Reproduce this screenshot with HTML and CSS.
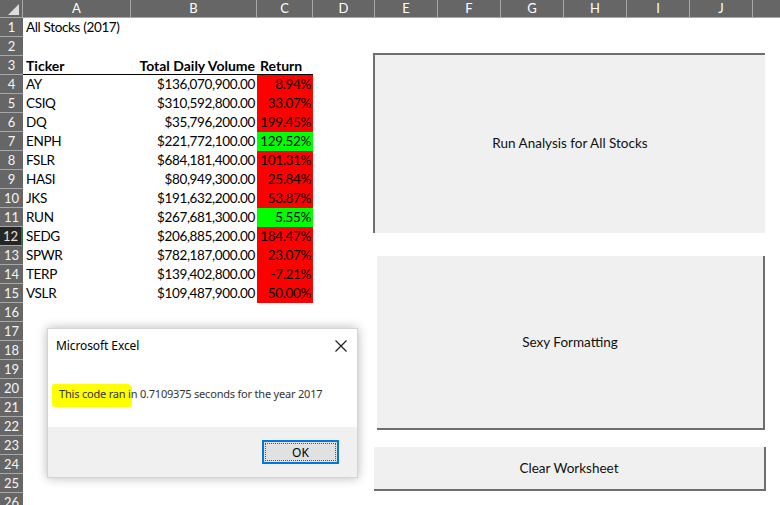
FILE: index.html
```html
<!DOCTYPE html>
<html>
<head>
<meta charset="utf-8">
<link rel="stylesheet" href="styles.css">
</head>
<body>
<div class="app">
  <div class="colhead">
    <div class="corner"><div class="tri"></div></div>
    <div class="ch w-a">A</div>
    <div class="ch w-b">B</div>
    <div class="ch w-c">C</div>
    <div class="ch w-d">D</div>
    <div class="ch w-e">E</div>
    <div class="ch w-e">F</div>
    <div class="ch w-e">G</div>
    <div class="ch w-e">H</div>
    <div class="ch w-e">I</div>
    <div class="ch w-e">J</div>
    <div class="ch w-rest"></div>
  </div>
  <div class="sheet">
    <div class="row"><div class="rh">1</div><div class="c a">All Stocks (2017)</div><div class="c b"></div><div class="c r"></div></div>
    <div class="row"><div class="rh">2</div><div class="c a"></div><div class="c b"></div><div class="c r"></div></div>
    <div class="row hdr"><div class="rh">3</div><div class="c a">Ticker</div><div class="c b">Total Daily Volume</div><div class="c r lft">Return</div></div>
    <div class="row"><div class="rh">4</div><div class="c a">AY</div><div class="c b">$136,070,900.00</div><div class="c r red">8.94%</div></div>
    <div class="row"><div class="rh">5</div><div class="c a">CSIQ</div><div class="c b">$310,592,800.00</div><div class="c r red">33.07%</div></div>
    <div class="row"><div class="rh">6</div><div class="c a">DQ</div><div class="c b">$35,796,200.00</div><div class="c r red">199.45%</div></div>
    <div class="row"><div class="rh">7</div><div class="c a">ENPH</div><div class="c b">$221,772,100.00</div><div class="c r green">129.52%</div></div>
    <div class="row"><div class="rh">8</div><div class="c a">FSLR</div><div class="c b">$684,181,400.00</div><div class="c r red">101.31%</div></div>
    <div class="row"><div class="rh">9</div><div class="c a">HASI</div><div class="c b">$80,949,300.00</div><div class="c r red">25.84%</div></div>
    <div class="row"><div class="rh">10</div><div class="c a">JKS</div><div class="c b">$191,632,200.00</div><div class="c r red">53.87%</div></div>
    <div class="row"><div class="rh">11</div><div class="c a">RUN</div><div class="c b">$267,681,300.00</div><div class="c r green">5.55%</div></div>
    <div class="row"><div class="rh sel">12</div><div class="c a">SEDG</div><div class="c b">$206,885,200.00</div><div class="c r red">184.47%</div></div>
    <div class="row"><div class="rh">13</div><div class="c a">SPWR</div><div class="c b">$782,187,000.00</div><div class="c r red">23.07%</div></div>
    <div class="row"><div class="rh">14</div><div class="c a">TERP</div><div class="c b">$139,402,800.00</div><div class="c r red">-7.21%</div></div>
    <div class="row"><div class="rh">15</div><div class="c a">VSLR</div><div class="c b">$109,487,900.00</div><div class="c r red">50.00%</div></div>
    <div class="row"><div class="rh">16</div></div>
    <div class="row"><div class="rh">17</div></div>
    <div class="row"><div class="rh">18</div></div>
    <div class="row"><div class="rh">19</div></div>
    <div class="row"><div class="rh">20</div></div>
    <div class="row"><div class="rh">21</div></div>
    <div class="row"><div class="rh">22</div></div>
    <div class="row"><div class="rh">23</div></div>
    <div class="row"><div class="rh">24</div></div>
    <div class="row"><div class="rh">25</div></div>
    <div class="row"><div class="rh">26</div></div>
  </div>

  <div class="btn btn-run"><span>Run Analysis for All Stocks</span></div>
  <div class="btn btn-sexy"><span>Sexy Formatting</span></div>
  <div class="btn btn-clear"><span>Clear Worksheet</span></div>

  <div class="dialog">
    <div class="dlg-title">
      <span>Microsoft Excel</span>
      <svg class="dlg-close" width="12" height="12" viewBox="0 0 12 12"><path d="M0.5 0.5 L11.5 11.5 M11.5 0.5 L0.5 11.5" stroke="#1a1a1a" stroke-width="1.1" fill="none"/></svg>
    </div>
    <div class="dlg-body">
      <div class="hl"></div>
      <span class="msg">This code ran in 0.7109375 seconds for the year 2017</span>
    </div>
    <div class="dlg-foot">
      <div class="ok"><span>OK</span></div>
    </div>
  </div>
</div>
</body>
</html>
```

FILE: styles.css
```css
html, body {
  margin: 0;
  padding: 0;
  background: #fff;
}
.app {
  position: relative;
  width: 780px;
  height: 505px;
  overflow: hidden;
  font-family: Lato, "Open Sans", sans-serif;
}
.colhead {
  display: flex;
  height: 18px;
  background: #666;
  border-bottom: 1px solid #a8a8a8;
  box-sizing: border-box;
}
.corner {
  width: 23px;
  height: 17px;
  position: relative;
  border-right: 1px solid #a8a8a8;
  box-sizing: border-box;
}
.tri {
  position: absolute;
  right: 3px;
  bottom: 2px;
  width: 0;
  height: 0;
  border-left: 11px solid transparent;
  border-bottom: 11px solid #dcdcdc;
}
.ch {
  height: 17px;
  color: #fff;
  font-size: 13px;
  line-height: 17px;
  text-align: center;
  border-right: 1px solid #a8a8a8;
  box-sizing: border-box;
}
.w-a { width: 108px; }
.w-b { width: 126px; }
.w-c { width: 56px; }
.w-d { width: 62px; }
.w-e { width: 63px; }
.w-rest { flex: 1; border-right: none; }

.sheet {
  display: flex;
  flex-direction: column;
}
.row {
  display: flex;
  height: 19px;
}
.rh {
  width: 23px;
  flex: none;
  height: 19px;
  box-sizing: border-box;
  background: #666;
  color: #f4f4f4;
  border-bottom: 1px solid #a8a8a8;
  font-size: 13px;
  line-height: 19px;
  text-align: center;
}
.rh.sel {
  background: #262626;
  border-right: 2px solid #217346;
  color: #f0e0d0;
}
.c {
  height: 19px;
  box-sizing: border-box;
  font-size: 13.5px;
  letter-spacing: -0.35px;
  line-height: 19px;
  color: #000;
  white-space: nowrap;
}
.a {
  width: 108px;
  padding-left: 3px;
}
.b {
  width: 126px;
  text-align: right;
  padding-right: 2px;
}
.r {
  width: 56px;
  text-align: right;
  padding-right: 2px;
}
.r.lft {
  text-align: left;
  padding-left: 3px;
}
.hdr .c {
  font-weight: bold;
  font-size: 14px;
  letter-spacing: 0;
  border-bottom: 1px solid #000;
}
.red { background: #ff0000; }
.green { background: #00ff00; }

.btn {
  position: absolute;
  background: #f0f0f0;
  box-sizing: border-box;
  display: flex;
  align-items: center;
  justify-content: center;
  font-size: 13.5px;
  color: #111;
}
.btn-run {
  left: 373px;
  top: 53px;
  width: 392px;
  height: 180px;
  border-top: 2px solid #6e6e6e;
  border-left: 2px solid #6e6e6e;
}
.btn-run span {
  margin-top: -3px;
}
.btn-sexy {
  left: 377px;
  top: 256px;
  width: 388px;
  height: 174px;
  border-right: 2px solid #6e6e6e;
  border-bottom: 2px solid #6e6e6e;
}
.btn-clear {
  left: 374px;
  top: 447px;
  width: 392px;
  height: 44px;
  border-right: 2px solid #6e6e6e;
  border-bottom: 2px solid #6e6e6e;
}

.dialog {
  position: absolute;
  left: 47px;
  top: 328px;
  width: 311px;
  height: 150px;
  background: #fff;
  border: 1px solid #d4d4d4;
  box-sizing: border-box;
  box-shadow: 0 0 10px rgba(0,0,0,0.28);
  display: flex;
  flex-direction: column;
  font-family: "Noto Sans", "Open Sans", sans-serif;
}
.dlg-title {
  height: 33px;
  display: flex;
  align-items: center;
  justify-content: space-between;
  padding: 0 8px 0 8px;
  font-size: 12px;
  letter-spacing: -0.1px;
  color: #000;
}
.dlg-close {
  margin-right: 2px;
}
.dlg-body {
  position: relative;
  flex: 1;
  padding: 24px 0 0 11px;
  font-size: 11px;
  letter-spacing: -0.2px;
  color: #333;
}
.msg {
  position: relative;
}
.hl {
  position: absolute;
  left: 4px;
  top: 22px;
  width: 80px;
  height: 23px;
  background: #ffff00;
  border-radius: 2px 5px 3px 3px;
}
.dlg-foot {
  height: 50px;
  background: #f0f0f0;
  display: flex;
  justify-content: flex-end;
  align-items: flex-start;
  padding: 13px 18px 0 0;
  box-sizing: border-box;
}
.ok {
  width: 77px;
  height: 24px;
  box-sizing: border-box;
  border: 2px solid #0078d7;
  background: #e1e1e1;
  display: flex;
  align-items: center;
  justify-content: center;
  font-size: 12px;
  color: #000;
  outline: 1px dotted #555;
  outline-offset: -4px;
}
```
